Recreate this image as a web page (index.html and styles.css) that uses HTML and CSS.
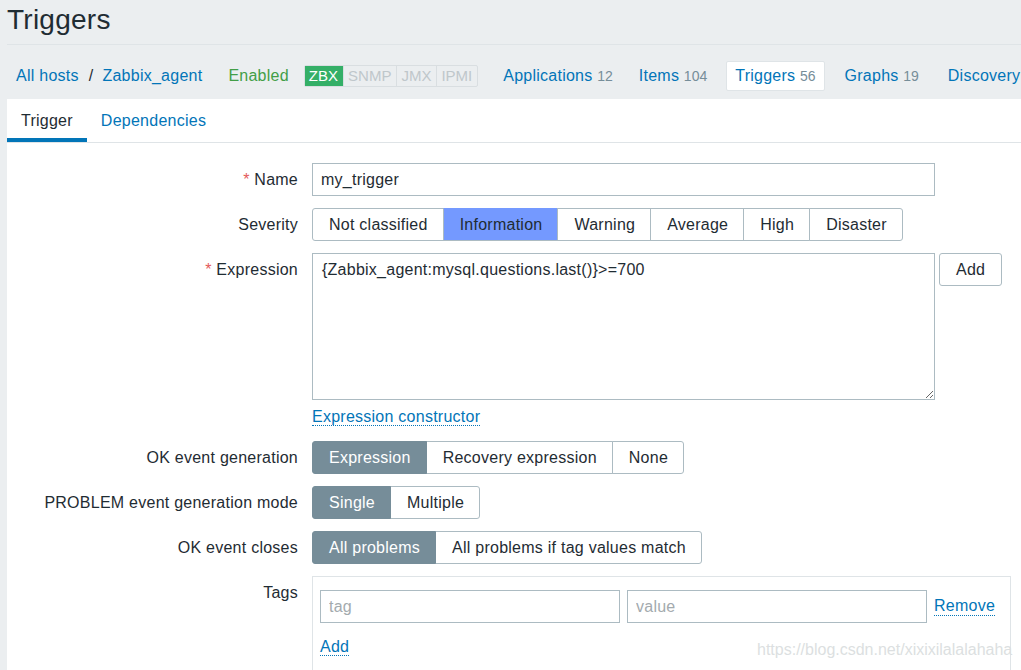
FILE: index.html
```html
<!DOCTYPE html>
<html lang="en">
<head>
<meta charset="utf-8">
<title>Triggers</title>
<link rel="stylesheet" href="styles.css">
</head>
<body>
<div class="page">
  <header class="title-bar"><h1>Triggers</h1></header>
  <nav class="host-nav">
    <a class="nav-item link">All hosts</a>
    <span class="sep">/</span>
    <a class="nav-item link">Zabbix_agent</a>
    <span class="nav-item status-on">Enabled</span>
    <span class="avail"><span class="av av-on">ZBX</span><span class="av">SNMP</span><span class="av">JMX</span><span class="av">IPMI</span></span>
    <a class="nav-item link nav-apps">Applications <span class="count">12</span></a>
    <a class="nav-item link nav-items">Items <span class="count">104</span></a>
    <span class="nav-item selected">Triggers <span class="count">56</span></span>
    <a class="nav-item link nav-graphs">Graphs <span class="count">19</span></a>
    <a class="nav-item link nav-disc">Discovery</a>
  </nav>
  <main class="panel">
    <div class="tabs">
      <span class="tab active">Trigger</span>
      <span class="tab">Dependencies</span>
    </div>
    <form class="form">
      <div class="label"><span class="req">*</span> Name</div>
      <div class="field"><input class="text-input wide" type="text" value="my_trigger"></div>

      <div class="label">Severity</div>
      <div class="field">
        <div class="segmented">
          <span class="seg">Not classified</span><span class="seg info">Information</span><span class="seg">Warning</span><span class="seg">Average</span><span class="seg">High</span><span class="seg">Disaster</span>
        </div>
      </div>

      <div class="label"><span class="req">*</span> Expression</div>
      <div class="field">
        <div class="expr-row">
          <textarea class="expr">{Zabbix_agent:mysql.questions.last()}&gt;=700</textarea>
          <button type="button" class="btn">Add</button>
        </div>
        <div class="constructor"><a class="dotted">Expression constructor</a></div>
      </div>

      <div class="label">OK event generation</div>
      <div class="field">
        <div class="segmented">
          <span class="seg on">Expression</span><span class="seg">Recovery expression</span><span class="seg">None</span>
        </div>
      </div>

      <div class="label">PROBLEM event generation mode</div>
      <div class="field">
        <div class="segmented">
          <span class="seg on">Single</span><span class="seg">Multiple</span>
        </div>
      </div>

      <div class="label">OK event closes</div>
      <div class="field">
        <div class="segmented">
          <span class="seg on">All problems</span><span class="seg">All problems if tag values match</span>
        </div>
      </div>

      <div class="label">Tags</div>
      <div class="field">
        <div class="tags-box">
          <div class="tag-row">
            <input class="text-input tag" type="text" placeholder="tag">
            <input class="text-input tag" type="text" placeholder="value">
            <a class="dotted remove">Remove</a>
          </div>
          <div class="tag-add"><a class="dotted">Add</a></div>
        </div>
      </div>
    </form>
  </main>
  <div class="watermark">https://blog.csdn.net/xixixilalalahaha</div>
</div>
</body>
</html>
```
FILE: styles.css
```css
* { box-sizing: border-box; }
html, body { margin: 0; padding: 0; }
body {
  background: #ebeef0;
  color: #1f2c33;
  font-family: "Liberation Sans", Arial, sans-serif;
  font-size: 16px;
  letter-spacing: 0.25px;
  overflow: hidden;
  height: 670px;
}
.page {
  position: relative;
  padding-left: 7px;
  height: 670px;
}
.title-bar {
  border-bottom: 1px solid #dfe4e7;
  height: 45px;
}
.title-bar h1 {
  margin: 0;
  font-size: 28px;
  font-weight: normal;
  line-height: 40px;
  color: #1f2c33;
}
.host-nav {
  display: flex;
  align-items: center;
  height: 54px;
  padding: 16px 0 8px;
  white-space: nowrap;
}
.nav-item {
  display: block;
  height: 30px;
  line-height: 30px;
  padding: 0 9px;
  flex: none;
}
.link { color: #0275b8; text-decoration: none; }
.sep { margin: 0 0 0 1px; color: #1f2c33; }
.status-on { color: #429e47; margin-left: 8px; }
.avail {
  display: flex;
  margin-left: 6px;
  border: 1px solid #d9dee1;
  border-radius: 2px;
  height: 22px;
  flex: none;
}
.av {
  font-size: 15px;
  letter-spacing: 0;
  line-height: 20px;
  padding: 0 5px 0 4px;
  color: #bfc7cb;
  border-left: 1px solid #d9dee1;
}
.av:first-child { border-left: 0; }
.av-on { background: #34af67; color: #fff; }
.nav-apps { margin-left: 16px; }
.nav-items { margin-left: 8px; }
.nav-graphs { margin-left: 11px; }
.nav-disc { margin-left: 11px; }
.count { color: #768d99; font-size: 14px; letter-spacing: 0; }
.selected {
  background: #fff;
  border: 1px solid #dfe4e7;
  border-radius: 2px;
  padding: 0 8px;
  line-height: 28px;
  color: #0275b8;
  margin-left: 10px;
}

.panel {
  background: #fff;
  height: 600px;
}
.tabs {
  display: flex;
  border-bottom: 1px solid #dfe4e7;
}
.tab {
  padding: 4px 14px 0;
  line-height: 35px;
  border-bottom: 4px solid transparent;
  color: #0275b8;
}
.tab.active {
  color: #1f2c33;
  border-bottom-color: #0275b8;
}
.form {
  display: grid;
  grid-template-columns: 291px 1fr;
  column-gap: 14px;
  row-gap: 12px;
  padding-top: 20px;
}
.label {
  text-align: right;
  line-height: 33px;
  white-space: nowrap;
}
.req { color: #e45959; }
.field { min-width: 0; }
.text-input {
  height: 33px;
  border: 1px solid #acbbc2;
  padding: 0 8px;
  font-family: inherit;
  font-size: 16px;
  letter-spacing: 0.25px;
  color: #1f2c33;
  background: #fff;
  border-radius: 0;
  outline: none;
}
.text-input::placeholder { color: #a3aaae; }
.wide { width: 623px; display: block; }
.segmented {
  display: inline-flex;
  height: 33px;
}
.seg {
  line-height: 31px;
  padding: 0 15px 0 16px;
  border: 1px solid #acbbc2;
  margin-left: -1px;
  background: #fff;
  white-space: nowrap;
}
.seg:first-child { margin-left: 0; border-radius: 3px 0 0 3px; }
.seg:last-child { border-radius: 0 3px 3px 0; }
.seg.info { background: #7499ff; border-color: #7499ff #acbbc2 #acbbc2 #acbbc2; }
.seg.on { background: #768d99; border-color: #768d99; color: #fff; position: relative; }
.expr-row { display: flex; align-items: flex-start; }
.expr {
  width: 623px;
  height: 147px;
  border: 1px solid #acbbc2;
  padding: 6px 9px;
  font-family: inherit;
  font-size: 16px;
  letter-spacing: 0.25px;
  line-height: 19px;
  color: #1f2c33;
  resize: both;
  outline: none;
  margin: 0;
}
.btn {
  margin-left: 4px;
  height: 33px;
  padding: 0 16px;
  background: #fff;
  border: 1px solid #acbbc2;
  border-radius: 3px;
  font-family: inherit;
  font-size: 16px;
  letter-spacing: 0.25px;
  color: #1f2c33;
}
.constructor {
  margin-top: 5px;
  line-height: 24px;
}
.dotted {
  color: #0275b8;
  text-decoration: none;
  border-bottom: 1px dotted #0275b8;
}
.tags-box {
  width: 699px;
  border: 1px solid #dfe4e7;
  padding: 13px 7px 20px;
}
.tag-row {
  display: flex;
  align-items: center;
  gap: 7px;
}
.tag { width: 300px; }
.tag-add {
  margin-top: 12px;
  line-height: 24px;
}
.watermark {
  position: absolute;
  left: 757px;
  top: 641px;
  font-size: 16px;
  letter-spacing: 0;
  color: #dcdfe1;
  white-space: nowrap;
}
```
